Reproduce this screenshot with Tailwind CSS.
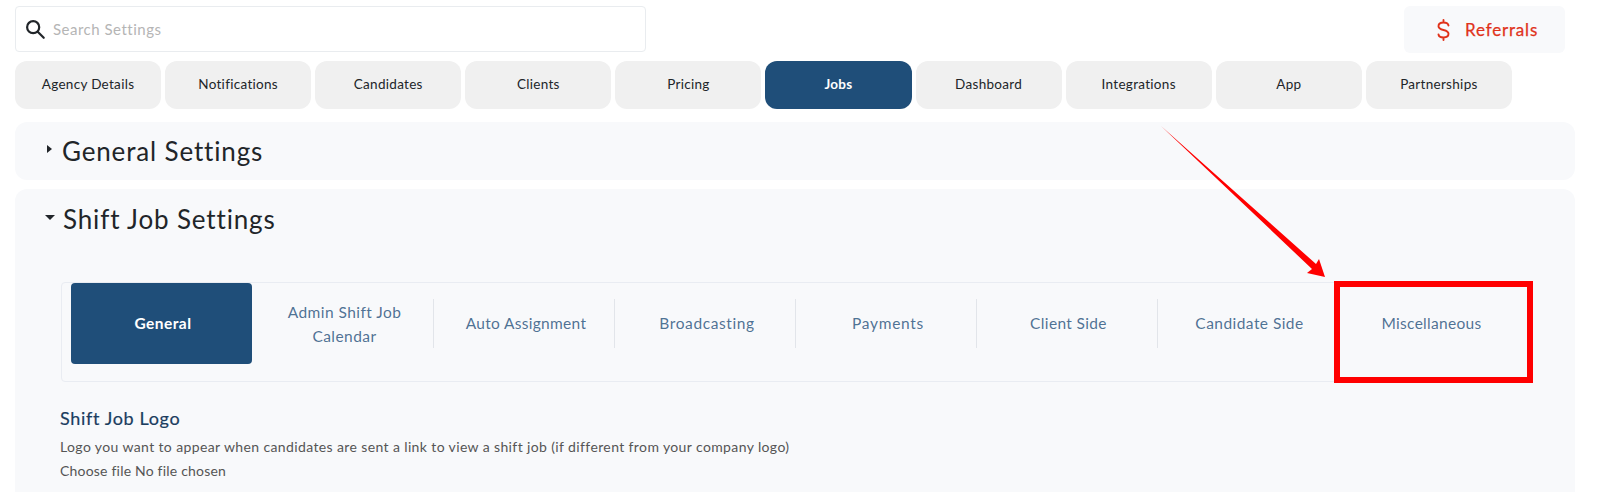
<!DOCTYPE html>
<html lang="en">
<head>
    <meta charset="UTF-8">
    <title>Settings</title>
    <script src="https://cdn.jsdelivr.net/npm/@tailwindcss/browser@4"></script>
</head>
<body class="relative h-[492px] overflow-hidden bg-white font-['Lato',sans-serif] text-[#212529]">
    <div class="pl-[15px] pr-[25px]">
        <div class="flex items-start justify-between pt-[6px] pr-[10px]">
            <div class="flex h-[46px] w-[631px] items-center rounded border border-[#e9ecef] bg-white pl-[8px]">
                <svg class="h-[22px] w-[22px]" viewBox="0 0 24 24" fill="none" stroke="#212529" stroke-width="2.4" stroke-linecap="round"><circle cx="10" cy="10" r="6.6"/><path d="M15 15l6.5 6.5"/></svg>
                <span class="ml-[7px] text-[15px] tracking-[0.5px] text-[#b5b5b5]">Search Settings</span>
            </div>
            <button class="flex h-[47px] w-[161px] items-center gap-[15px] rounded-md bg-[#f8f9fb] pl-[33px] text-[17px] tracking-[0.82px] text-[#e0321a] [-webkit-text-stroke:0.25px]">
                <svg class="h-[22px] w-[13px]" viewBox="0 0 13 22" fill="none" stroke="#e0321a" stroke-width="1.900" stroke-linecap="round"><path d="M6.500 1v2.500M6.500 18.500V21M11.500 6.500C11.200 4.600 9.200 3.500 6.500 3.500 3.800 3.500 1.500 4.800 1.500 7.200c0 2.300 2.200 3.100 5 3.800 2.800.7 5 1.500 5 3.800 0 2.400-2.300 3.700-5 3.700-2.700 0-4.700-1.100-5-3"/></svg>
                Referrals
            </button>
        </div>

        <div class="mt-[8px] flex gap-[4px] text-[13.500px] tracking-[0.3px]">
            <a class="flex h-[48px] w-[146.100px] items-center justify-center rounded-xl bg-[#f0f0f0] pb-[2px]">Agency Details</a>
            <a class="flex h-[48px] w-[146.100px] items-center justify-center rounded-xl bg-[#f0f0f0] pb-[2px]">Notifications</a>
            <a class="flex h-[48px] w-[146.100px] items-center justify-center rounded-xl bg-[#f0f0f0] pb-[2px]">Candidates</a>
            <a class="flex h-[48px] w-[146.100px] items-center justify-center rounded-xl bg-[#f0f0f0] pb-[2px]">Clients</a>
            <a class="flex h-[48px] w-[146.100px] items-center justify-center rounded-xl bg-[#f0f0f0] pb-[2px]">Pricing</a>
            <a class="flex h-[48px] w-[146.100px] items-center justify-center rounded-xl bg-[#1f4e79] pb-[2px] font-bold text-white">Jobs</a>
            <a class="flex h-[48px] w-[146.100px] items-center justify-center rounded-xl bg-[#f0f0f0] pb-[2px]">Dashboard</a>
            <a class="flex h-[48px] w-[146.100px] items-center justify-center rounded-xl bg-[#f0f0f0] pb-[2px]">Integrations</a>
            <a class="flex h-[48px] w-[146.100px] items-center justify-center rounded-xl bg-[#f0f0f0] pb-[2px]">App</a>
            <a class="flex h-[48px] w-[146.100px] items-center justify-center rounded-xl bg-[#f0f0f0] pb-[2px]">Partnerships</a>
        </div>

        <section class="mt-[13px] flex h-[58px] items-center rounded-xl bg-[#f8f9fb] pl-[32px]">
            <span class="mr-[10px] h-0 w-0 border-y-[4.500px] border-l-[5px] border-y-transparent border-l-[#212529] -translate-y-[2px]"></span>
            <h2 class="text-[26px] tracking-[0.85px]">General Settings</h2>
        </section>

        <section class="mt-[9px] h-[320px] rounded-xl bg-[#f8f9fb]">
            <div class="flex items-center pl-[30px] pt-[11px]">
                <span class="mr-[8px] h-0 w-0 border-x-[5px] border-t-[5px] border-x-transparent border-t-[#212529] -translate-y-[2px]"></span>
                <h2 class="text-[26px] tracking-[0.85px]">Shift Job Settings</h2>
            </div>

            <div class="mx-[46px] mt-[43px]">
                <div class="flex h-[100px] w-[1469px] items-start rounded border border-[#e9ecf2] pl-[9px] text-[15.500px] tracking-[0.45px] text-[#1f4e79]/80">
                    <a class="flex h-[81px] w-[181px] items-center justify-center rounded bg-[#1f4e79] pl-[3px] font-bold text-white">General</a>
                    <div class="flex h-[81px] w-[182px] items-center"><span class="flex h-[49px] w-full items-center justify-center border-r border-[#e2e5ea] pl-[18px] pr-[14px] text-center leading-[24px]">Admin Shift Job Calendar</span></div>
                    <div class="flex h-[81px] w-[181px] items-center"><span class="flex h-[49px] w-full items-center justify-center border-r border-[#e2e5ea] pl-[4px] tracking-[0.3px]">Auto Assignment</span></div>
                    <div class="flex h-[81px] w-[181px] items-center"><span class="flex h-[49px] w-full items-center justify-center border-r border-[#e2e5ea] pl-[4px] tracking-[0.6px]">Broadcasting</span></div>
                    <div class="flex h-[81px] w-[181px] items-center"><span class="flex h-[49px] w-full items-center justify-center border-r border-[#e2e5ea] pl-[4px] tracking-[0.7px]">Payments</span></div>
                    <div class="flex h-[81px] w-[181px] items-center"><span class="flex h-[49px] w-full items-center justify-center border-r border-[#e2e5ea] pl-[3px] tracking-[0.35px]">Client Side</span></div>
                    <div class="flex h-[81px] w-[181px] items-center"><span class="flex h-[49px] w-full items-center justify-center pl-[2px]">Candidate Side</span></div>
                    <div class="flex h-[81px] w-[181px] items-center justify-center pl-[4px] tracking-[0.3px]">Miscellaneous</div>
                </div>

                <div class="-ml-px">
                    <h3 class="mt-[24px] text-[18px] leading-[24px] tracking-[0.65px] text-[#1b3d5f] [-webkit-text-stroke:0.2px]">Shift Job Logo</h3>
                    <p class="mt-[5px] text-[14px] leading-[24px] tracking-[0.38px] text-[#555]">Logo you want to appear when candidates are sent a link to view a shift job (if different from your company logo)</p>
                    <p class="text-[14px] leading-[24px] tracking-[0.2px] text-[#555]">Choose file No file chosen</p>
                </div>
            </div>
        </section>
    </div>

    <!-- red annotation drawn over the screenshot -->
    <div class="absolute left-[1334px] top-[281px] h-[102px] w-[199px] border-[6px] border-[#ff0000]"></div>
    <svg class="absolute left-0 top-0 pointer-events-none" width="1600" height="492"><path d="M1161 126L1316 264 1319 259 1325 277 1307 273 1312 269Z" fill="#ff0000"/></svg>
</body>
</html>
